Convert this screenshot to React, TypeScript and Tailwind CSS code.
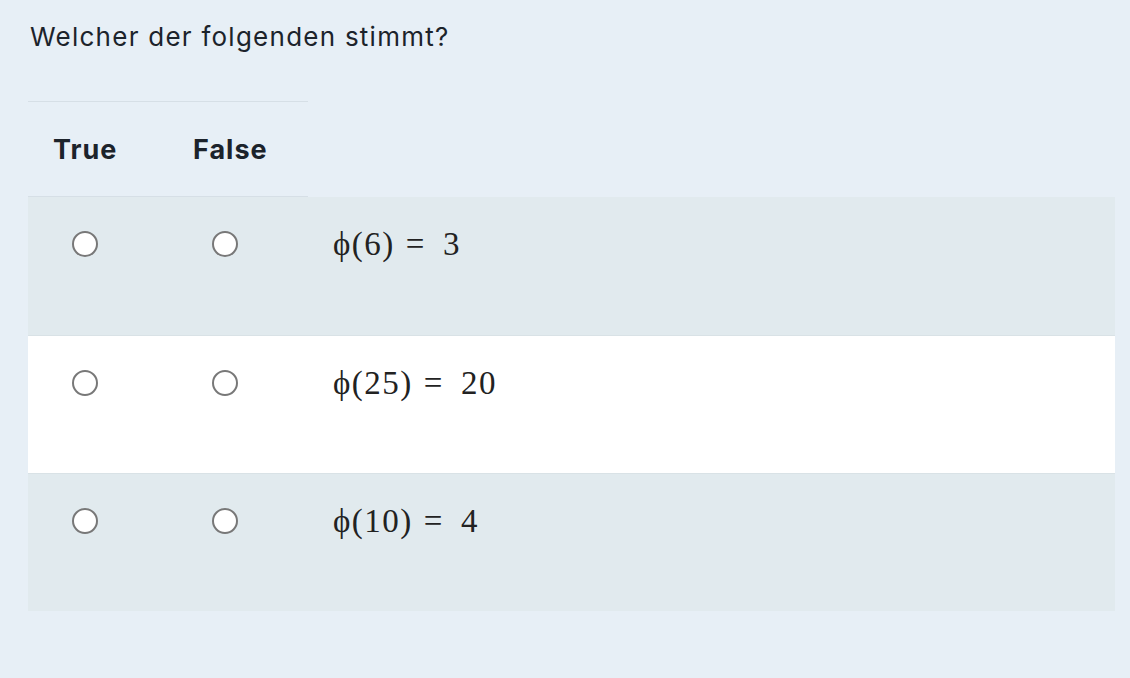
import React from 'react';

const rows = [
  { arg: '6', val: '3', bg: 'bg-[#e1eaee]' },
  { arg: '25', val: '20', bg: 'bg-white' },
  { arg: '10', val: '4', bg: 'bg-[#e1eaee]' },
];

function Radio() {
  return (
    <span className="block h-[26px] w-[26px] rounded-full border-2 border-[#787878] bg-white" />
  );
}

export default function App() {
  return (
    <div className="min-h-[678px] bg-[#e7eff6] pl-7 pr-[15px] pt-[18px] font-['Inter',sans-serif] text-[#1c232b]">
      <h1 className="pl-[2px] text-[26px] font-normal leading-[38px] tracking-[1.25px]">
        Welcher der folgenden stimmt?
      </h1>

      <div className="mt-[45px] flex h-[96px] w-[280px] items-center border-y border-[#d6dfe6] pt-[3px] text-[27px] font-bold tracking-[1px]">
        <div className="w-[140px] pl-[25px]">True</div>
        <div className="w-[140px] pl-[25px]">False</div>
      </div>

      {rows.map((row, i) => (
        <div
          key={row.arg}
          className={`flex h-[138px] items-start ${row.bg} ${i > 0 ? 'border-t border-[#d9e2e6]' : ''}`}
        >
          <div className="w-[140px] pl-[44px] pt-[34px]">
            <Radio />
          </div>
          <div className="w-[140px] pl-[44px] pt-[34px]">
            <Radio />
          </div>
          <div className="pl-[25px] pt-[27px] font-['Liberation_Serif',serif] text-[33px] leading-[40px] tracking-[1.5px] text-[#222]">
            ϕ({row.arg})<span className="ml-[11px] mr-[17px]">=</span>
            {row.val}
          </div>
        </div>
      ))}
    </div>
  );
}
